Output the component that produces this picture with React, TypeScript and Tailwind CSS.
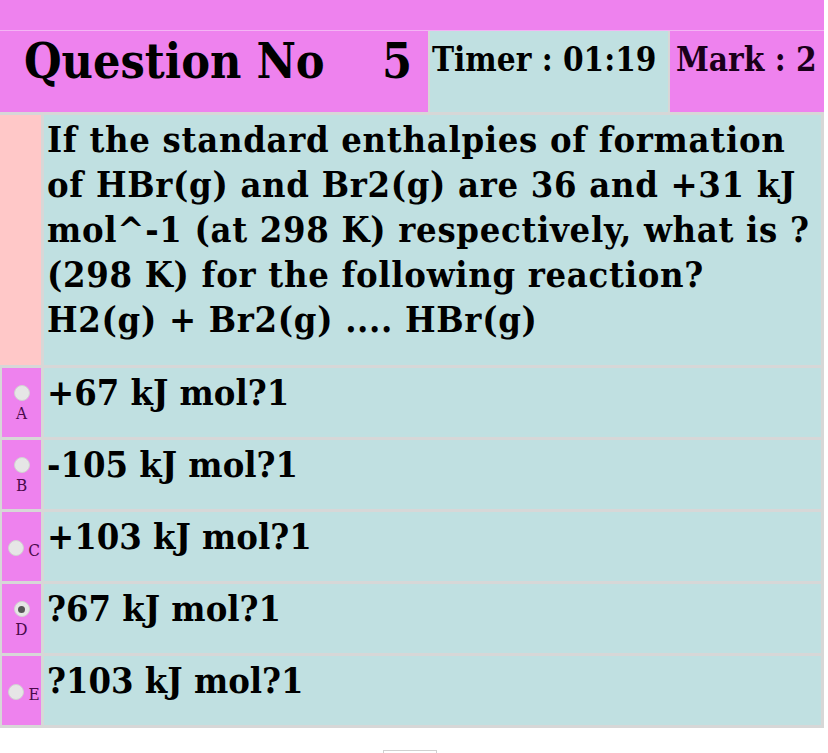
import React from 'react';

const options = [
  { key: 'A', text: '+67 kJ mol?1', inline: false, checked: false },
  { key: 'B', text: '-105 kJ mol?1', inline: false, checked: false },
  { key: 'C', text: '+103 kJ mol?1', inline: true, checked: false },
  { key: 'D', text: '?67 kJ mol?1', inline: false, checked: true },
  { key: 'E', text: '?103 kJ mol?1', inline: true, checked: false },
];

const serif = { fontFamily: '"DejaVu Serif Condensed", "DejaVu Serif", "Liberation Serif", serif' };

const questionLines = [
  'If the standard enthalpies of formation',
  'of HBr(g) and Br2(g) are 36 and +31 kJ',
  'mol^-1 (at 298 K) respectively, what is ?',
  '(298 K) for the following reaction?',
  'H2(g) + Br2(g) .... HBr(g)',
];

function Radio({ checked }: { checked: boolean }) {
  return (
    <span className="w-[16px] h-[16px] rounded-full bg-[#e6e6e6] border border-[#d2d2d2] flex items-center justify-center shrink-0">
      {checked && <span className="w-[7px] h-[7px] rounded-full bg-[#555]"></span>}
    </span>
  );
}

export default function App() {
  return (
    <div className="w-[828px] h-[753px] bg-white overflow-hidden" style={serif}>
      <div className="w-[824px] bg-[#d7d7d7] flex flex-col">
        <div className="h-[30px] bg-[#ee82ee]"></div>
        <div className="h-[1px] bg-[#f4b4f4]"></div>
        <div className="flex gap-[2px] h-[81px]">
          <div className="w-[428px] shrink-0 bg-[#ee82ee] flex items-start pt-[2px] font-bold text-black">
            <span className="pl-[24px] text-[48px] leading-[1.2]">Question No</span>
            <span className="ml-auto pr-[16px] text-[48px] leading-[1.2]">5</span>
          </div>
          <div className="w-[238px] shrink-0 bg-[#c0e0e1] pt-[9px] pl-[2px] font-bold text-[33px] leading-[1.2] text-black whitespace-nowrap">
            Timer : 01:19
          </div>
          <div className="flex-1 bg-[#ee82ee] pt-[9px] pl-[6px] font-bold text-[33px] leading-[1.2] text-[#1a001a] whitespace-nowrap overflow-hidden">
            Mark : 2
          </div>
        </div>
        <div className="flex flex-col gap-[3px] pt-[3px] pb-[3px]">
          <div className="flex gap-[3px] h-[250px] pr-[3px]">
            <div className="w-[41px] bg-[#ffc8c8]"></div>
            <div className="flex-1 bg-[#c0e0e1] pl-[3px] pt-[2px] font-bold text-[36px] leading-[45px] tracking-[0.7px] text-black whitespace-nowrap">
              {questionLines.map((l) => (
                <div key={l}>{l}</div>
              ))}
            </div>
          </div>
          {options.map((o) => (
            <div key={o.key} className="flex gap-[3px] h-[69px] pl-[2px] pr-[3px]">
              <div className="w-[39px] bg-[#ee82ee] flex items-center justify-center">
                {o.inline ? (
                  <div className="flex items-center gap-[4px] ml-[5px] mt-[2px]">
                    <Radio checked={o.checked} />
                    <span className="text-[17px] leading-none text-[#4a0a4a] mt-[5px]">{o.key}</span>
                  </div>
                ) : (
                  <div className="flex flex-col items-center gap-[4px] mt-[2px]">
                    <Radio checked={o.checked} />
                    <span className="text-[17px] leading-none text-[#4a0a4a]">{o.key}</span>
                  </div>
                )}
              </div>
              <div className="flex-1 bg-[#c0e0e1] pl-[3px] pt-[2px] font-bold text-[36px] leading-[45px] text-black whitespace-nowrap">
                {o.text}
              </div>
            </div>
          ))}
        </div>
      </div>
      <div className="flex justify-center mt-[22px]">
        <div className="w-[54px] h-[20px] border border-[#d0d0d0] bg-white ml-[-8px]"></div>
      </div>
    </div>
  );
}
